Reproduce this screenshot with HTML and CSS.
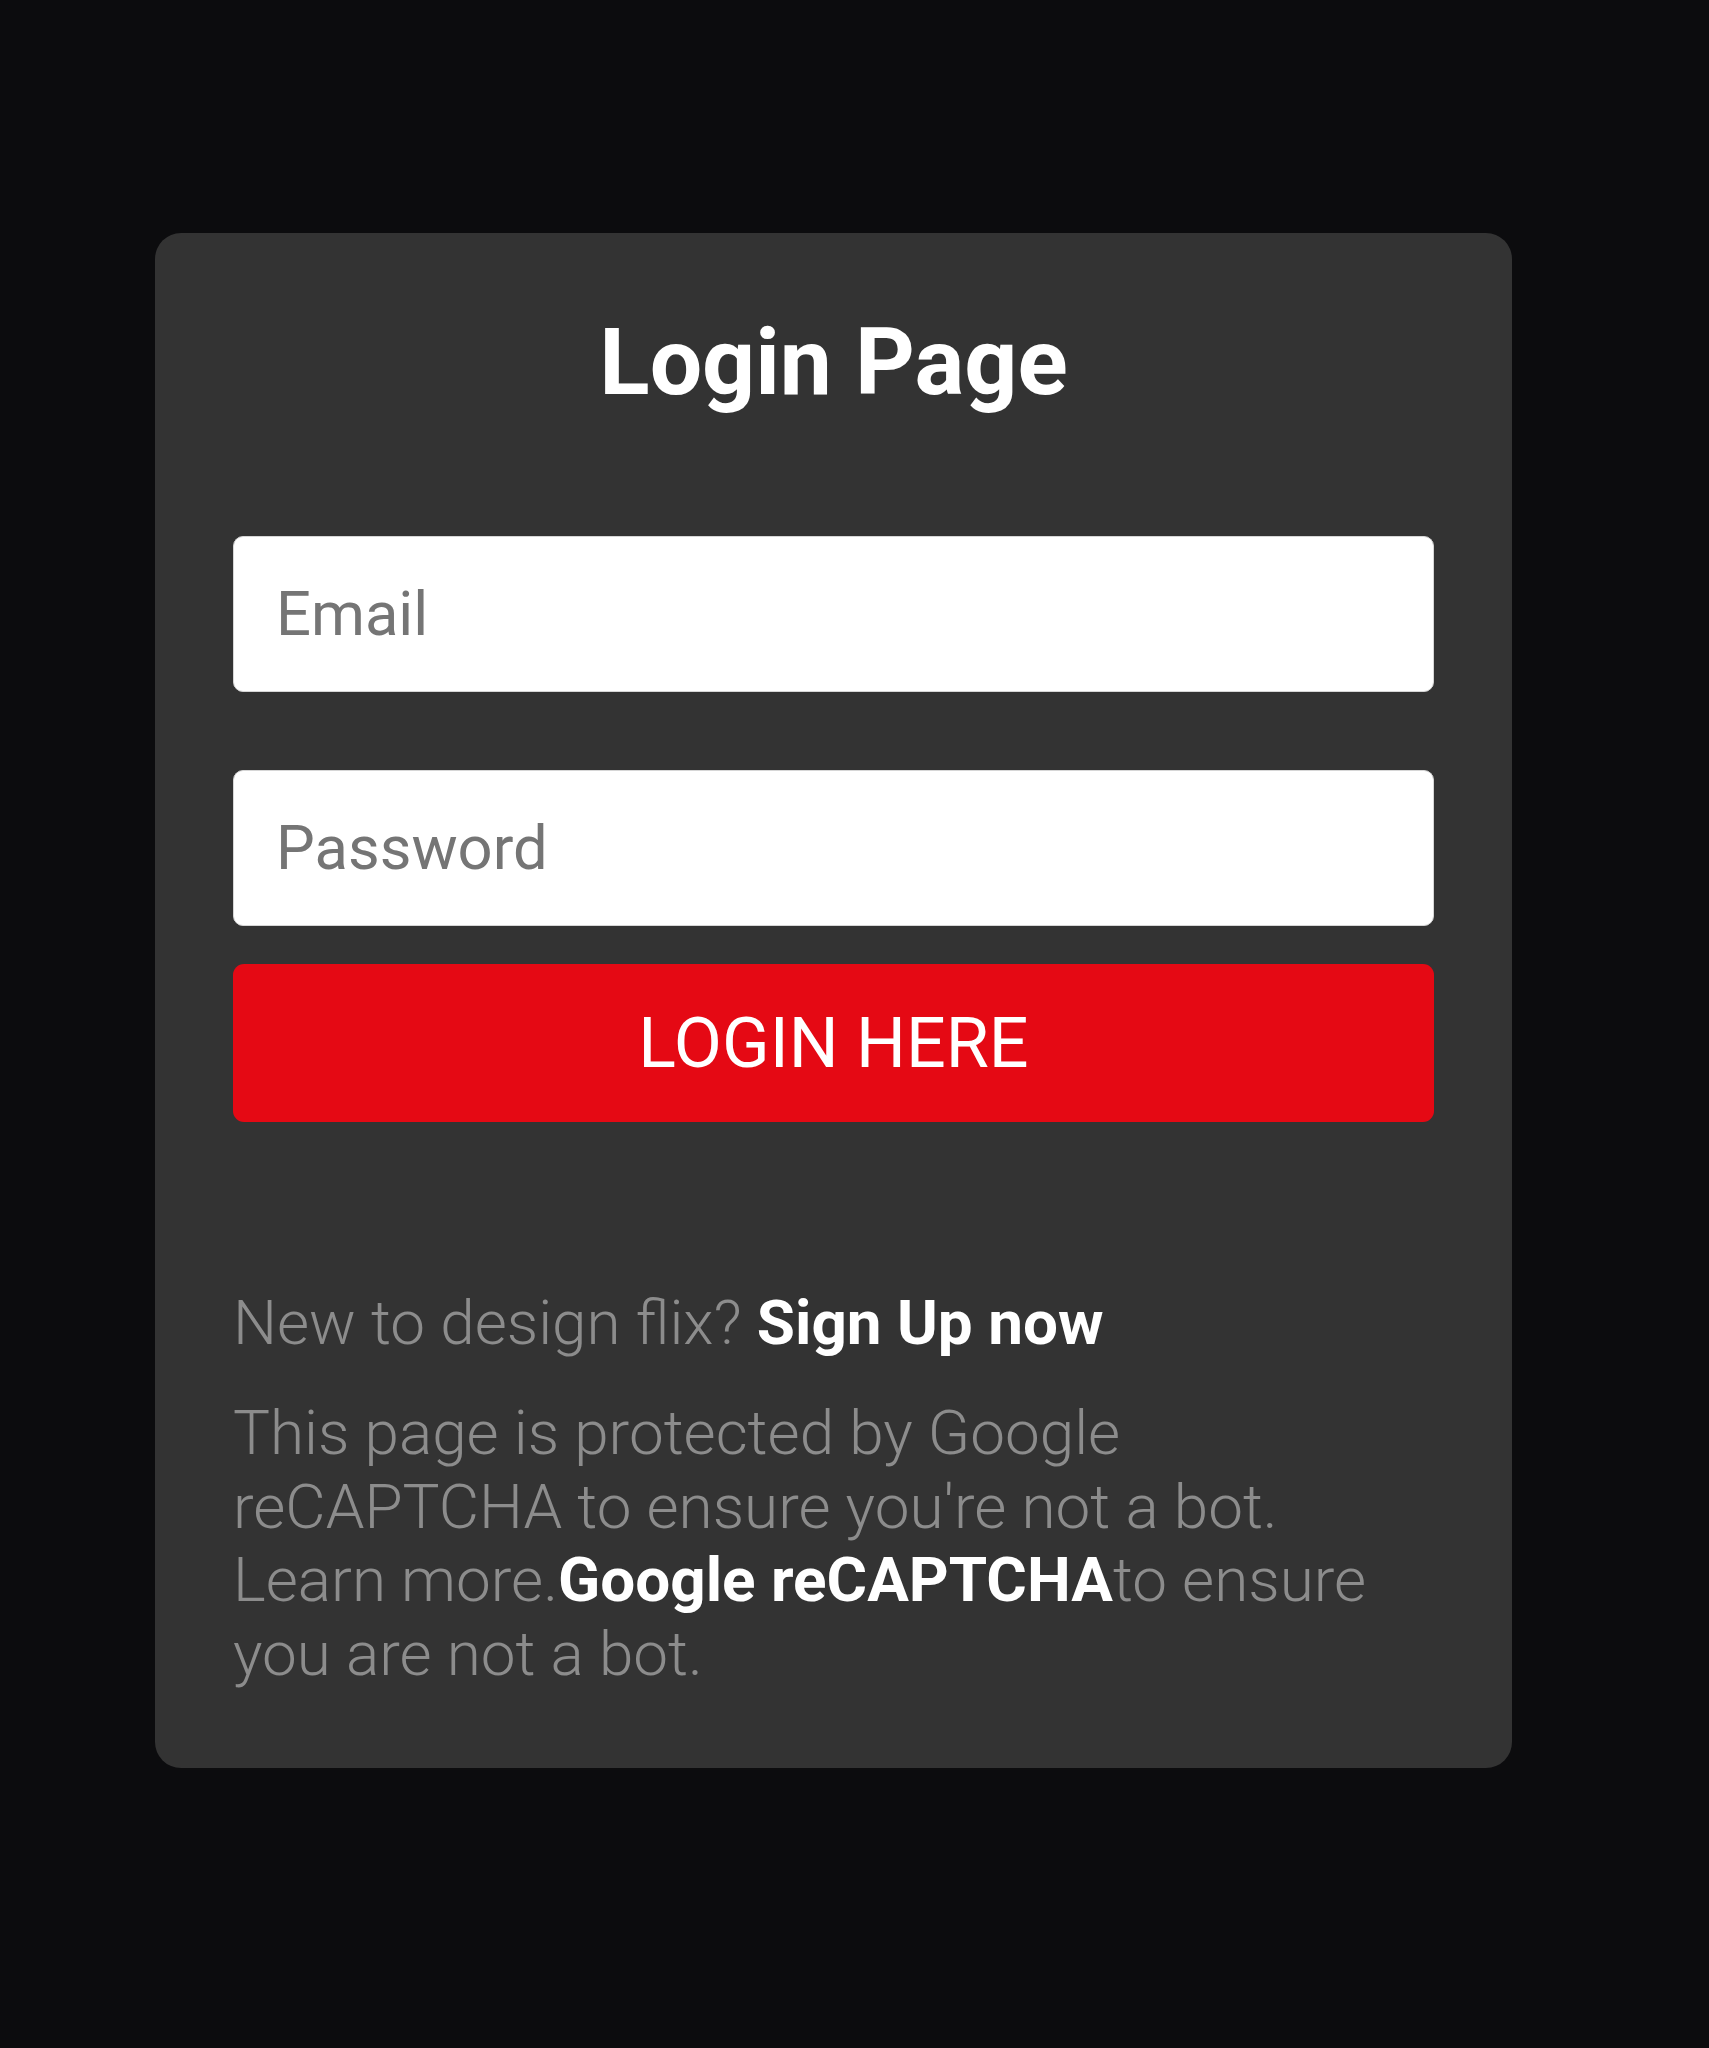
FILE: index.html
```html
<!DOCTYPE html>
<html lang="en">
<head>
<meta charset="utf-8">
<title>Login Page</title>
<link rel="stylesheet" href="styles.css">
</head>
<body>
<main class="page">
  <section class="card">
    <h1 class="title">Login Page</h1>
    <form class="form">
      <input class="field field-email" type="email" placeholder="Email">
      <input class="field field-password" type="password" placeholder="Password">
      <button class="btn" type="button">LOGIN HERE</button>
    </form>
    <p class="signup">New to design flix? <a class="strong" href="#">Sign Up now</a></p>
    <p class="note">This page is protected by Google reCAPTCHA to ensure you're not a bot. Learn more.<a class="strong" href="#">Google reCAPTCHA</a>to ensure you are not a bot.</p>
  </section>
</main>
</body>
</html>
```
FILE: styles.css
```css
* { box-sizing: border-box; }
html, body {
  margin: 0;
  padding: 0;
  background: #0c0c0e;
}
body {
  font-family: Roboto, "Liberation Sans", sans-serif;
  min-height: 2048px;
}
.page {
  padding-top: 233px;
  padding-left: 155px;
}
.card {
  width: 1357px;
  background: #333333;
  border-radius: 26px;
  padding: 74px 78px 78px 78px;
}
.title {
  margin: 0;
  text-align: center;
  color: #ffffff;
  font-size: 93px;
  font-weight: 700;
  line-height: 112px;
}
.form {
  display: flex;
  flex-direction: column;
  margin-top: 117px;
}
.field {
  display: block;
  width: 100%;
  height: 156px;
  border: 1px solid #d6d6d6;
  border-radius: 10px;
  background: #ffffff;
  padding: 0 42px;
  font-family: Roboto, "Liberation Sans", sans-serif;
  font-size: 61.5px;
  color: #333;
  outline: none;
}
.field::placeholder { color: #757575; }
.field-password { margin-top: 78px; }
.btn {
  margin-top: 38px;
  width: 100%;
  height: 158px;
  border: none;
  border-radius: 11px;
  background: #e50914;
  color: #ffffff;
  font-family: Roboto, "Liberation Sans", sans-serif;
  font-size: 70px;
  font-weight: 400;
  padding: 0;
  cursor: pointer;
}
.signup {
  margin: 164px 0 0 0;
  color: #8c8c8c;
  font-size: 62px;
  font-weight: 300;
  line-height: 74px;
}
.note {
  margin: 36px 0 0 0;
  color: #8c8c8c;
  font-size: 62px;
  font-weight: 300;
  line-height: 73.6px;
}
.strong {
  color: #ffffff;
  font-weight: 700;
  text-decoration: none;
}
```
